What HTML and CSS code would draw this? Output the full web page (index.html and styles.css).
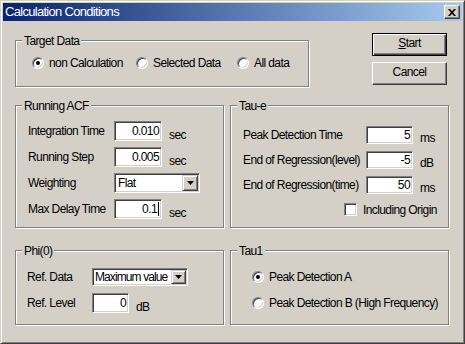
FILE: index.html
```html
<!DOCTYPE html>
<html>
<head>
<meta charset="utf-8">
<link rel="stylesheet" href="styles.css">
</head>
<body>
<div class="window">
  <div class="titlebar">
    <span class="title">Calculation Conditions</span>
    <span class="close"><svg width="8" height="7" viewBox="0 0 8 7"><path d="M0 0h2l2 2.3L6 0h2L5 3.5 8 7H6L4 4.7 2 7H0l3-3.5z" fill="#000"/></svg></span>
  </div>
  <div class="content">
    <div class="toprow">
      <div class="group target">
        <span class="legend">Target Data</span>
        <div class="radios">
          <div class="opt w1"><span class="rb on"></span><span>non Calculation</span></div>
          <div class="opt w2"><span class="rb"></span><span>Selected Data</span></div>
          <div class="opt"><span class="rb"></span><span>All data</span></div>
        </div>
      </div>
      <div class="buttons">
        <div class="btn default"><span><u>S</u>tart</span></div>
        <div class="btn"><span>Cancel</span></div>
      </div>
    </div>
    <div class="grid">
      <div class="group acf">
        <span class="legend">Running ACF</span>
        <div class="rows">
          <div class="row"><span class="lbl">Integration Time</span><span class="field">0.010</span><span class="unit">sec</span></div>
          <div class="row"><span class="lbl">Running Step</span><span class="field">0.005</span><span class="unit">sec</span></div>
          <div class="row"><span class="lbl">Weighting</span><span class="combo wcombo"><span class="ctext">Flat</span><span class="drop"><svg width="7" height="4" viewBox="0 0 7 4"><path d="M0 0h7L3.5 4z" fill="#000"/></svg></span></span></div>
          <div class="row"><span class="lbl">Max Delay Time</span><span class="field">0.1<span class="caret"></span></span><span class="unit">sec</span></div>
        </div>
      </div>
      <div class="group taue">
        <span class="legend">Tau-e</span>
        <div class="rows">
          <div class="row"><span class="lbl">Peak Detection Time</span><span class="field">5</span><span class="unit">ms</span></div>
          <div class="row"><span class="lbl">End of Regression(level)</span><span class="field">-5</span><span class="unit">dB</span></div>
          <div class="row"><span class="lbl">End of Regression(time)</span><span class="field">50</span><span class="unit">ms</span></div>
          <div class="check"><span class="cb"></span><span>Including Origin</span></div>
        </div>
      </div>
      <div class="group phi">
        <span class="legend">Phi(0)</span>
        <div class="rows">
          <div class="row r1"><span class="lbl">Ref. Data</span><span class="combo pcombo"><span class="ctext">Maximum value</span><span class="drop"><svg width="7" height="4" viewBox="0 0 7 4"><path d="M0 0h7L3.5 4z" fill="#000"/></svg></span></span></div>
          <div class="row r2"><span class="lbl">Ref. Level</span><span class="field">0</span><span class="unit">dB</span></div>
        </div>
      </div>
      <div class="group tau1">
        <span class="legend">Tau1</span>
        <div class="rows">
          <div class="opt"><span class="rb on"></span><span>Peak Detection A</span></div>
          <div class="opt"><span class="rb"></span><span>Peak Detection B (High Frequency)</span></div>
        </div>
      </div>
    </div>
  </div>
</div>
</body>
</html>
```
FILE: styles.css
```css
* { box-sizing: border-box; }
html, body { margin: 0; padding: 0; }
body {
  background: #d4d0c8;
  font-family: "Liberation Sans", Arial, sans-serif;
  font-size: 12px;
  letter-spacing: -0.6px;
  color: #000;
}
.window {
  width: 465px;
  height: 344px;
  background: #d4d0c8;
  border: 1px solid;
  border-color: #d4d0c8 #404040 #404040 #d4d0c8;
  box-shadow: inset 1px 1px 0 #fff, inset -1px -1px 0 #808080;
  padding: 2px;
  display: flex;
  flex-direction: column;
}
.titlebar {
  height: 18px;
  flex: none;
  display: flex;
  align-items: center;
  padding: 0 2px 0 2px;
  background: linear-gradient(to right, #0a246a, #a6caf0);
  color: #fff;
  font-size: 13px;
  letter-spacing: -0.7px;
  line-height: 18px;
}
.close {
  margin-left: auto;
  width: 16px;
  height: 14px;
  background: #d4d0c8;
  border: 1px solid;
  border-color: #fff #404040 #404040 #fff;
  box-shadow: inset -1px -1px 0 #808080;
  display: flex;
  align-items: center;
  justify-content: center;
}
.content {
  flex: 1;
  padding: 12px 15px 0 12px;
}
.toprow {
  display: flex;
  align-items: flex-start;
}
.group {
  border: 1px solid #808080;
  box-shadow: inset 1px 1px 0 #fff, 1px 1px 0 #fff;
}
.legend {
  display: table;
  margin: -7px 0 0 6px;
  padding: 0 2px;
  background: #d4d0c8;
  line-height: 14px;
}
.target {
  width: 294px;
  height: 47px;
  margin-top: 7px;
}
.radios {
  display: flex;
  padding: 8px 0 0 16px;
}
.opt {
  display: flex;
  align-items: center;
  gap: 5px;
  height: 14px;
  line-height: 14px;
}
.w1 { width: 104px; }
.w2 { width: 101px; }
.rb {
  width: 12px;
  height: 12px;
  flex: none;
  border-radius: 50%;
  background: #fff;
  border: 1px solid;
  border-color: #808080 #fff #fff #808080;
  box-shadow: inset 1px 1px 0 #404040, inset -1px -1px 0 #d4d0c8;
  display: flex;
  align-items: center;
  justify-content: center;
}
.rb.on::after {
  content: "";
  width: 4px;
  height: 4px;
  border-radius: 50%;
  background: #000;
}
.buttons {
  margin-left: auto;
  display: flex;
  flex-direction: column;
  gap: 6px;
}
.btn {
  width: 75px;
  height: 23px;
  display: flex;
  align-items: center;
  justify-content: center;
  padding-bottom: 4px;
  line-height: 14px;
  border: 1px solid;
  border-color: #fff #404040 #404040 #fff;
  box-shadow: inset -1px -1px 0 #808080;
}
.btn.default {
  border-color: #000;
  box-shadow: inset 1px 1px 0 #fff, inset -1px -1px 0 #404040, inset -2px -2px 0 #808080;
}
.btn u { text-decoration: underline; text-underline-offset: 1px; }
.grid {
  margin-top: 18px;
  display: grid;
  grid-template-columns: 209px 219px;
  grid-template-rows: 123px 75px;
  column-gap: 6px;
  row-gap: 22px;
}
.rows {
  display: flex;
  flex-direction: column;
}
.row {
  display: flex;
  align-items: center;
  line-height: 14px;
}
.unit {
  align-self: flex-end;
  margin-left: 7px;
  line-height: 14px;
  margin-bottom: -1px;
}
.field {
  display: block;
  background: #fff;
  border: 1px solid;
  border-color: #808080 #fff #fff #808080;
  box-shadow: inset 1px 1px 0 #404040, inset -1px -1px 0 #d4d0c8;
  text-align: right;
  padding: 0 2px 0 3px;
}
.caret {
  display: inline-block;
  width: 1px;
  height: 14px;
  background: #000;
  vertical-align: -3px;
  margin-left: 1px;
}
.combo {
  display: flex;
  background: #fff;
  border: 1px solid;
  border-color: #808080 #fff #fff #808080;
  box-shadow: inset 1px 1px 0 #404040, inset -1px -1px 0 #d4d0c8;
  padding: 1px;
}
.ctext {
  flex: 1;
  white-space: nowrap;
  padding-left: 2px;
}
.drop {
  width: 16px;
  flex: none;
  background: #d4d0c8;
  border: 1px solid;
  border-color: #d4d0c8 #404040 #404040 #d4d0c8;
  box-shadow: inset 1px 1px 0 #fff, inset -1px -1px 0 #808080;
  display: flex;
  align-items: center;
  justify-content: center;
}
/* Running ACF */
.acf .rows { padding: 8px 0 0 12px; gap: 6px; }
.acf .row { height: 20px; }
.acf .lbl { width: 86px; }
.acf .field { width: 48px; height: 20px; line-height: 18px; }
.wcombo { width: 86px; height: 20px; line-height: 16px; }
/* Tau-e */
.taue .rows { padding: 13px 0 0 12px; gap: 7px; }
.taue .row { height: 18px; }
.taue .lbl { width: 123px; }
.taue .field { width: 47px; height: 18px; line-height: 16px; }
.check {
  display: flex;
  align-items: center;
  gap: 6px;
  height: 13px;
  line-height: 14px;
  margin-top: 2px;
  padding-left: 101px;
}
.cb {
  width: 13px;
  height: 13px;
  background: #fff;
  border: 1px solid;
  border-color: #808080 #fff #fff #808080;
  box-shadow: inset 1px 1px 0 #404040, inset -1px -1px 0 #d4d0c8;
}
/* Phi */
.phi .rows { padding: 10px 0 0 11px; gap: 7px; }
.phi .lbl { width: 65px; }
.phi .r1 { height: 18px; }
.phi .r2 { height: 20px; }
.pcombo { width: 96px; height: 18px; line-height: 14px; }
.pcombo .ctext { letter-spacing: -0.9px; padding-left: 1px; }
.pcombo .drop { width: 15px; }
.phi .field { width: 37px; height: 20px; line-height: 18px; }
/* Tau1 */
.tau1 .rows { padding: 12px 0 0 21px; gap: 12px; }
```
